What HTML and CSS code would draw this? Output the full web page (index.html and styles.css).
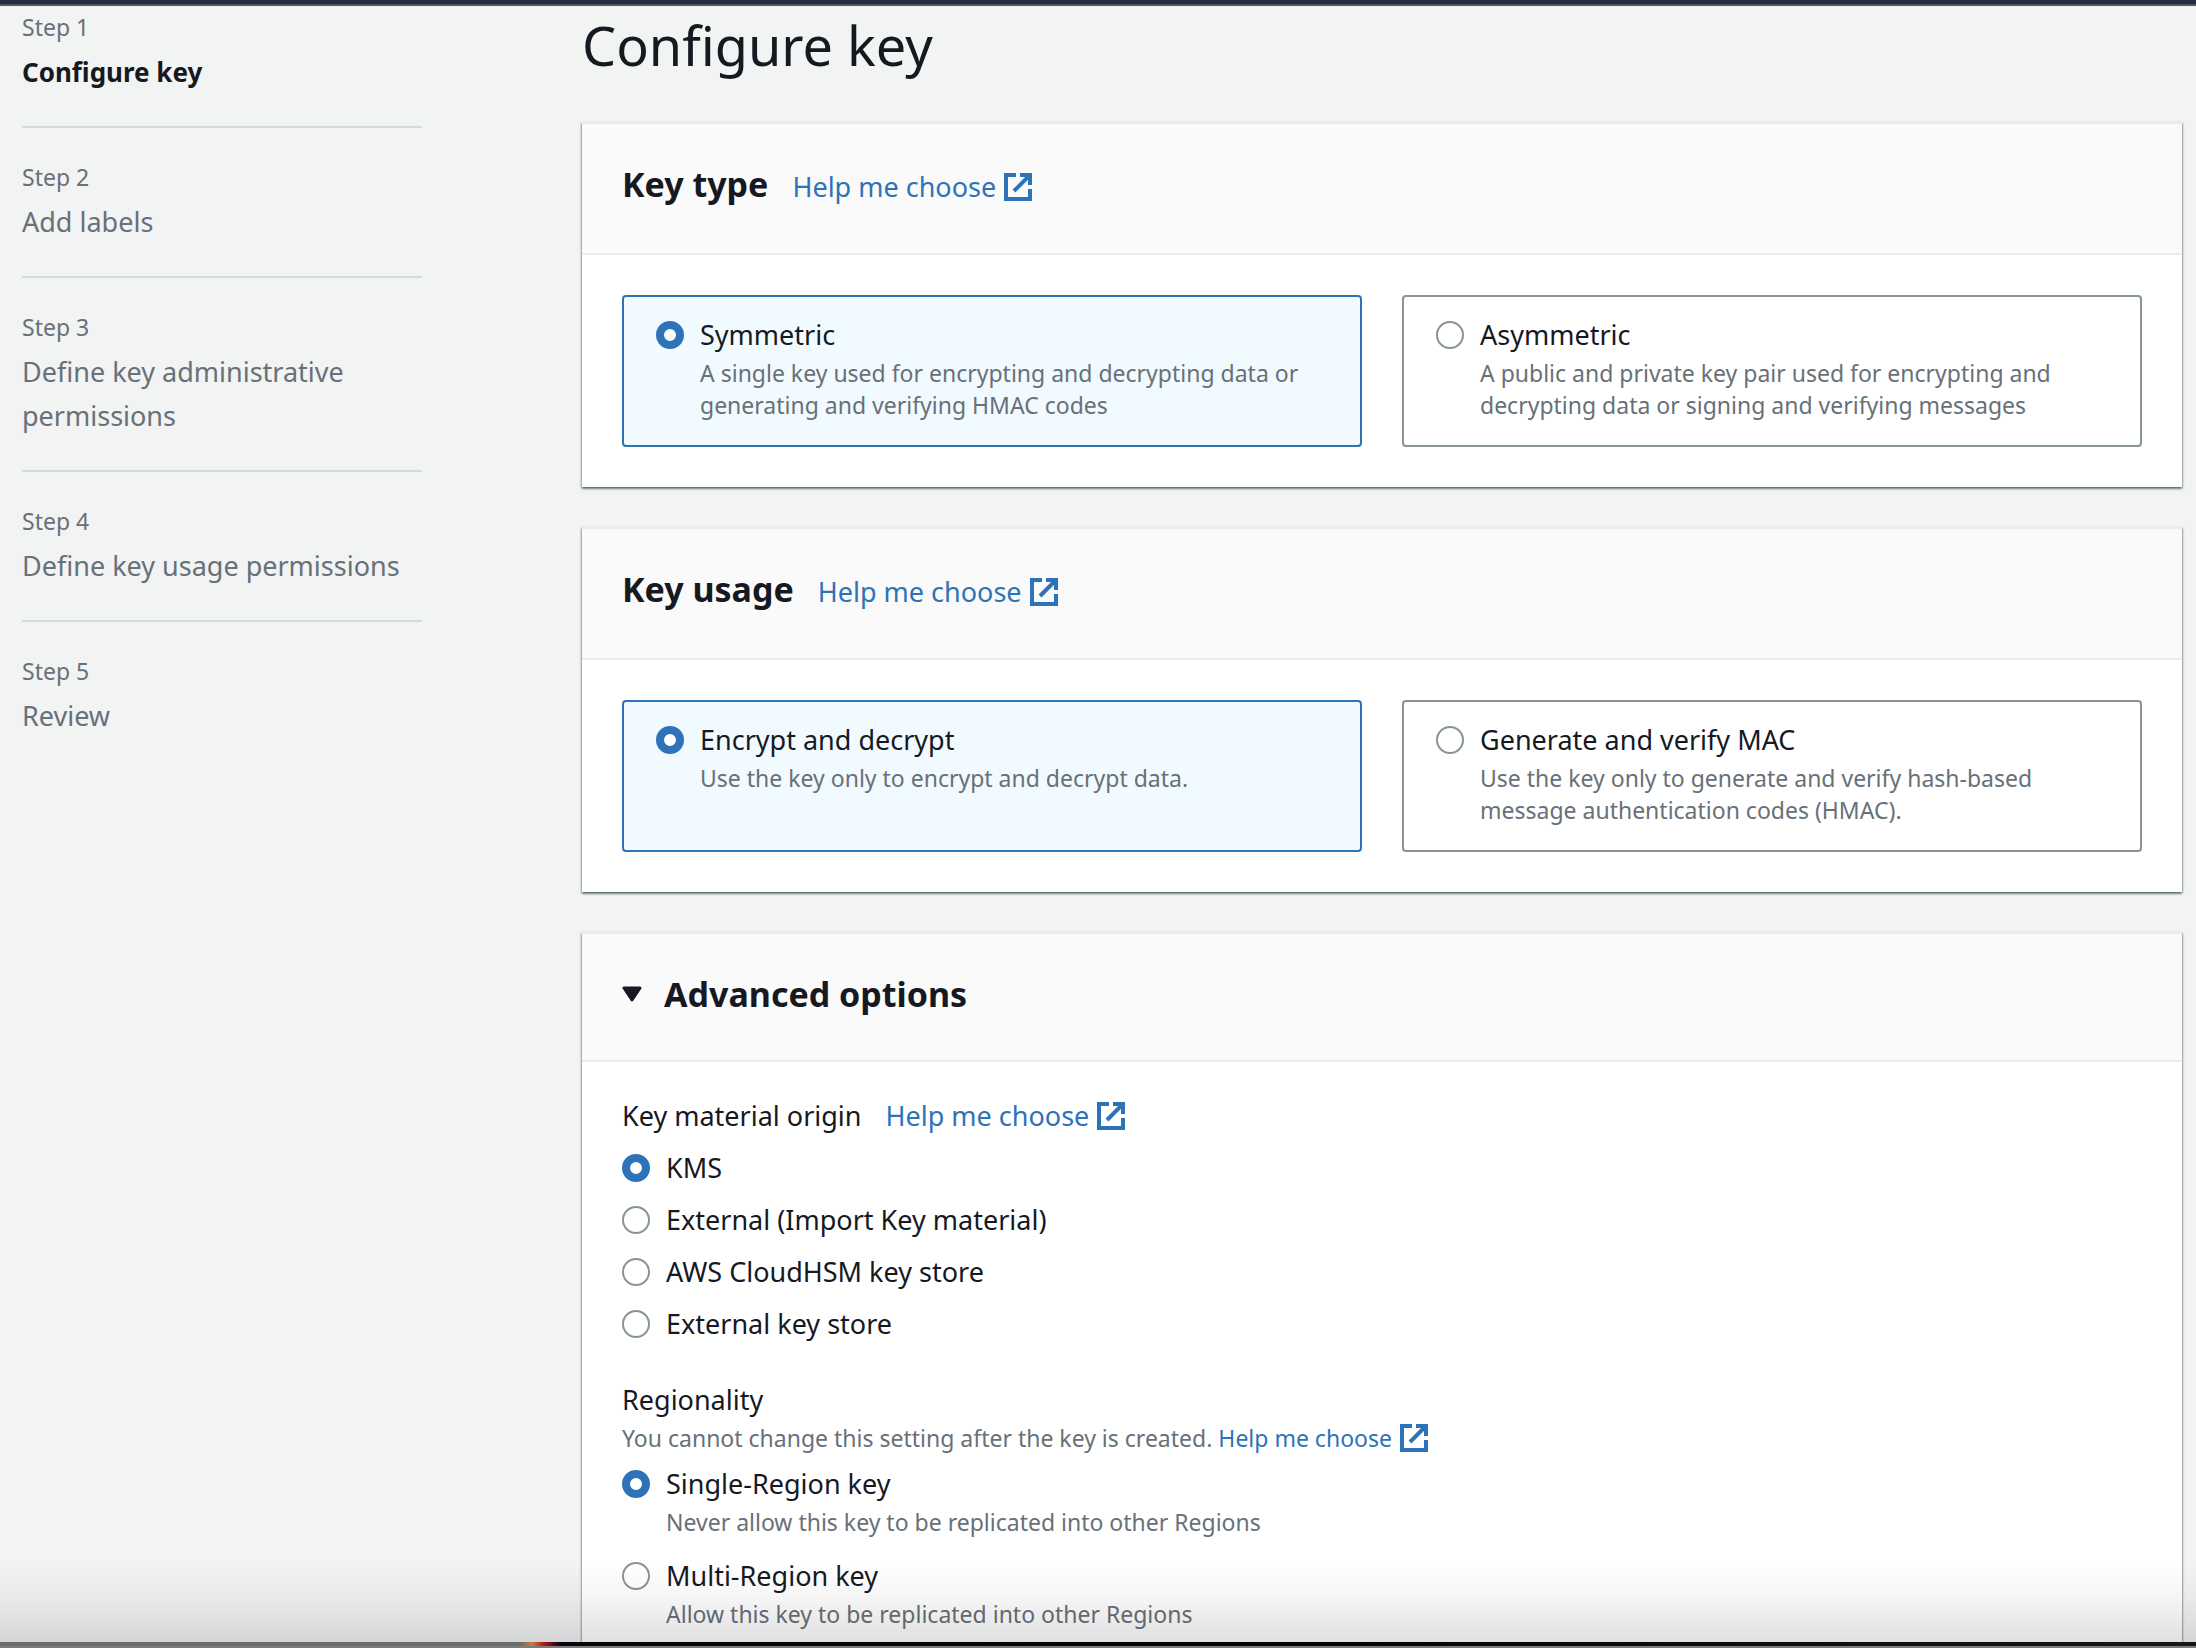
FILE: index.html
```html
<!DOCTYPE html>
<html lang="en">
<head>
<meta charset="utf-8">
<meta name="viewport" content="width=device-width, initial-scale=1">
<title>Configure key</title>
<link rel="stylesheet" href="styles.css">
</head>
<body>
<svg class="sprite" aria-hidden="true">
  <symbol id="external" viewBox="0 0 28 28">
    <path d="M12 2H2v24h24V16M16 2h10v10M26 2 10 18" fill="none" stroke="currentColor" stroke-width="4"/>
  </symbol>
</svg>
<div class="topbar"></div>
<div class="layout">
  <nav class="steps" aria-label="Steps">
    <ol class="step-list">
      <li class="step step-current" aria-current="step"><span class="step-number">Step 1</span><span class="step-name">Configure key</span></li>
      <li class="step"><span class="step-number">Step 2</span><span class="step-name">Add labels</span></li>
      <li class="step"><span class="step-number">Step 3</span><span class="step-name">Define key administrative permissions</span></li>
      <li class="step"><span class="step-number">Step 4</span><span class="step-name">Define key usage permissions</span></li>
      <li class="step"><span class="step-number">Step 5</span><span class="step-name">Review</span></li>
    </ol>
  </nav>
  <main class="content">
    <h1 class="title">Configure key</h1>

    <section class="panel">
      <header class="panel-header">
        <h2 class="panel-title" id="type-title">Key type</h2>
        <a class="link" href="#">Help me choose<svg class="link-icon" aria-hidden="true"><use href="#external"/></svg></a>
      </header>
      <div class="tiles" role="radiogroup" aria-labelledby="type-title">
        <label class="tile option">
          <input class="radio" type="radio" name="type" checked>
          <span class="option-text"><span class="option-label">Symmetric</span><span class="hint">A single key used for encrypting and decrypting data or generating and verifying HMAC codes</span></span>
        </label>
        <label class="tile option">
          <input class="radio" type="radio" name="type">
          <span class="option-text"><span class="option-label">Asymmetric</span><span class="hint">A public and private key pair used for encrypting and decrypting data or signing and verifying messages</span></span>
        </label>
      </div>
    </section>

    <section class="panel">
      <header class="panel-header">
        <h2 class="panel-title" id="usage-title">Key usage</h2>
        <a class="link" href="#">Help me choose<svg class="link-icon" aria-hidden="true"><use href="#external"/></svg></a>
      </header>
      <div class="tiles" role="radiogroup" aria-labelledby="usage-title">
        <label class="tile option">
          <input class="radio" type="radio" name="usage" checked>
          <span class="option-text"><span class="option-label">Encrypt and decrypt</span><span class="hint">Use the key only to encrypt and decrypt data.</span></span>
        </label>
        <label class="tile option">
          <input class="radio" type="radio" name="usage">
          <span class="option-text"><span class="option-label">Generate and verify MAC</span><span class="hint">Use the key only to generate and verify hash-based message authentication codes (HMAC).</span></span>
        </label>
      </div>
    </section>

    <section class="panel panel-last">
      <h2 class="panel-toggle-heading">
        <button class="panel-toggle panel-title" type="button" aria-expanded="true">
          <svg class="caret" viewBox="0 0 20 16" aria-hidden="true"><path d="M2 2h16l-8 12z" fill="currentColor" stroke="currentColor" stroke-width="3" stroke-linejoin="round"/></svg>Advanced options
        </button>
      </h2>
      <div class="fields">
        <div class="field" role="radiogroup" aria-labelledby="origin-title">
          <div class="field-heading">
            <span id="origin-title">Key material origin</span>
            <a class="link" href="#">Help me choose<svg class="link-icon" aria-hidden="true"><use href="#external"/></svg></a>
          </div>
          <div class="options">
            <label class="option"><input class="radio" type="radio" name="origin" checked><span class="option-label">KMS</span></label>
            <label class="option"><input class="radio" type="radio" name="origin"><span class="option-label">External (Import Key material)</span></label>
            <label class="option"><input class="radio" type="radio" name="origin"><span class="option-label">AWS CloudHSM key store</span></label>
            <label class="option"><input class="radio" type="radio" name="origin"><span class="option-label">External key store</span></label>
          </div>
        </div>
        <div class="field" role="radiogroup" aria-labelledby="region-title">
          <div class="field-heading"><span id="region-title">Regionality</span></div>
          <p class="hint hint-row">You cannot change this setting after the key is created. <a class="link link-small" href="#">Help me choose<svg class="link-icon" aria-hidden="true"><use href="#external"/></svg></a></p>
          <div class="options options-loose">
            <label class="option"><input class="radio" type="radio" name="region" checked><span class="option-text"><span class="option-label">Single-Region key</span><span class="hint">Never allow this key to be replicated into other Regions</span></span></label>
            <label class="option"><input class="radio" type="radio" name="region"><span class="option-text"><span class="option-label">Multi-Region key</span><span class="hint">Allow this key to be replicated into other Regions</span></span></label>
          </div>
        </div>
      </div>
    </section>
  </main>
</div>
<div class="bottombar"></div>
</body>
</html>
```
FILE: styles.css
```css
* { box-sizing: border-box; }

body {
  display: flex;
  flex-direction: column;
  height: 100vh;
  margin: 0;
  overflow: hidden;
  background: #f2f3f3;
  color: #16191f;
  font: 450 27px/44px "Noto Sans", sans-serif;
}

h1, h2, p, ol { margin: 0; padding: 0; }

.sprite { position: absolute; width: 0; height: 0; }

.topbar {
  flex: none;
  height: 6px;
  background: #232f3e;
  border-bottom: 2px solid #545463;
}

.layout {
  position: relative;
  display: flex;
  flex: 1;
  gap: 160px;
  min-height: 0;
  padding: 0 14px 0 22px;
  overflow: hidden;
}

/* Shade that fades the content out above the bottom edge */
.layout::after {
  content: "";
  position: absolute;
  inset: auto 0 0;
  height: 80px;
  background: linear-gradient(rgba(0, 0, 0, 0), rgba(0, 0, 0, .04) 45%, rgba(0, 0, 0, .12));
  pointer-events: none;
}

.steps { flex: none; width: 400px; padding-top: 4px; }
.step-list { list-style: none; }

.step {
  display: flex;
  flex-direction: column;
  gap: 6px;
  padding-bottom: 32px;
  color: #687078;
}
.step + .step { padding-top: 32px; border-top: 2px solid #d5dbdb; }
.step-number { font-size: 23px; line-height: 34px; }
.step-current .step-name { color: #16191f; font-size: 26px; font-weight: 700; }

.content {
  display: flex;
  flex: 1;
  flex-direction: column;
  gap: 40px;
  min-width: 0;
}

.title { margin-bottom: -2px; font-size: 54px; font-weight: 400; line-height: 78px; }

.panel {
  flex: none;
  background: #fff;
  border-top: 2px solid #eaeded;
  box-shadow: 0 2px 2px rgba(0, 28, 36, .4), 1px 1px 2px rgba(0, 28, 36, .25), -1px 1px 2px rgba(0, 28, 36, .25);
}
.panel-last { flex: 1 0 auto; }

.panel-header {
  display: flex;
  align-items: baseline;
  gap: 24px;
  padding: 38px 40px 44px;
  background: #fafafa;
  border-bottom: 2px solid #eaeded;
}
.panel-title { font-size: 34px; font-weight: 700; line-height: 44px; }

.panel-toggle-heading { background: #fafafa; border-bottom: 2px solid #eaeded; }
.panel-toggle {
  display: flex;
  align-items: center;
  gap: 22px;
  width: 100%;
  padding: 38px 40px 44px;
  background: none;
  border: 0;
  color: inherit;
  font-family: inherit;
  text-align: left;
}
.caret { width: 20px; height: 16px; }

.link {
  display: inline-flex;
  align-items: center;
  gap: 8px;
  color: #2e73b8;
  text-decoration: none;
}
.link-icon { flex: none; width: 28px; height: 28px; }

.tiles {
  display: grid;
  grid-template-columns: 1fr 1fr;
  gap: 40px;
  padding: 40px;
}
.option { display: flex; align-items: flex-start; gap: 16px; }
.tile {
  padding: 16px 32px 24px;
  border: 2px solid #879596;
  border-radius: 4px;
}
.tile:has(:checked) { background: #f1faff; border-color: #2e73b8; }

.radio {
  flex: none;
  width: 28px;
  height: 28px;
  margin: 8px 0;
  appearance: none;
  background: #fff;
  border: 2px solid #879596;
  border-radius: 50%;
}
.radio:checked { border: 8px solid #2e73b8; }

.option-text { display: flex; flex-direction: column; }
.hint { color: #687078; font-size: 23px; line-height: 32px; }
.hint-row { display: flex; gap: 6px; }

.fields {
  display: flex;
  flex-direction: column;
  gap: 32px;
  padding: 32px 40px;
}
.field-heading { display: flex; gap: 24px; }
.options { display: flex; flex-direction: column; gap: 8px; padding-top: 8px; }
.options-loose { gap: 16px; }

.bottombar {
  flex: none;
  height: 6px;
  background: linear-gradient(90deg, #6b6b6b 520px, #c08038 532px, #b01818 544px, #08060e 560px, #050507 60%, #17171a);
  border-bottom: 2px solid #7d7b7d;
}
```
